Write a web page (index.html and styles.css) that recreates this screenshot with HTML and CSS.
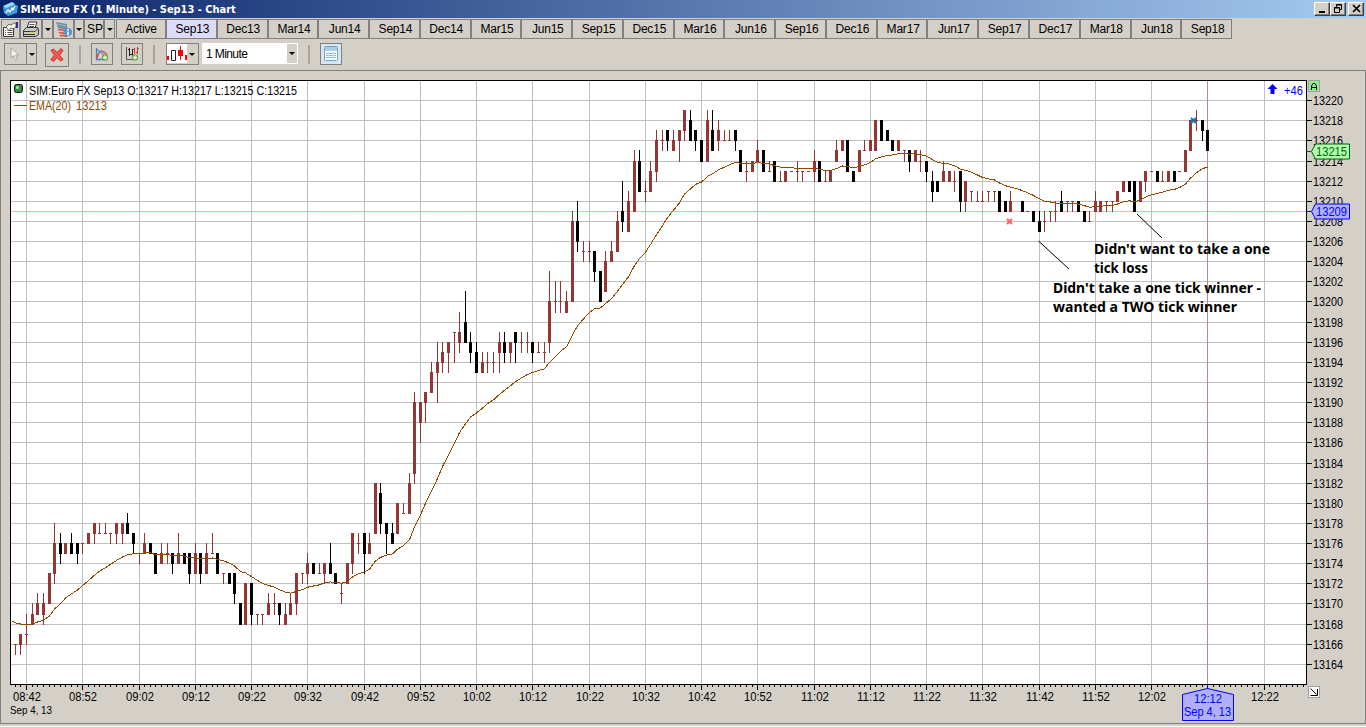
FILE: index.html
```html
<!DOCTYPE html>
<html lang="en">
<head>
    <meta charset="UTF-8">
    <meta name="viewport" content="width=device-width, initial-scale=1.0">
    <title>SIM:Euro FX (1 Minute) - Sep13 - Chart</title>
    <link rel="stylesheet" href="styles.css">
</head>
<body>
    <div class="window">
        <div class="titlebar">
            <svg class="app-icon" width="15" height="16" viewBox="0 0 15 16">
                <path d="M0 6 L9 2 L15 5 L14 12 L5 15 L1 12 Z" fill="#3d9be0"/>
                <path d="M0 5 L9 1 L12 3 L3 7 Z" fill="#a8dcf8"/>
                <path d="M3 12 L5 9 L7 11 L9 7 L10 9 L12 5" fill="none" stroke="#fff" stroke-width="1.2"/>
            </svg>
            <span class="title">SIM:Euro FX (1 Minute) - Sep13 - Chart</span>
            <div class="window-buttons">
                <button><svg width="13" height="12"><path d="M3 8h6v2h-6z"/></svg></button>
                <button><svg width="13" height="12" fill="none" stroke="#000"><path d="M4.5 4V1.5h5v5H8M4 2h6M2.5 4.5h5v5h-5zM2 5h6"/></svg></button>
                <button class="close"><svg width="13" height="12" fill="none" stroke="#000" stroke-width="1.7"><path d="M3 2l7 7M10 2l-7 7"/></svg></button>
            </div>
        </div>

        <div class="tabs">
            <button class="tool props"><svg width="17" height="17" viewBox="0 0 17 17">
                <path d="M1.5 6.5h10v9h-10z" fill="#fff" stroke="#333"/>
                <path d="M3 9.5h1M5.5 9.5h5M3 11.5h1M5.5 11.5h5M3 13.5h1M5.5 13.5h5" stroke="#555"/>
                <path d="M4 6l3-3 2 1 3-2h2v4l-3 2-2-1-2 3z" fill="#f5f0e4" stroke="#444" stroke-width=".8"/>
                <path d="M14 1h2v6h-2z" fill="#2b2d9c"/>
            </svg></button>
            <button class="tool print"><svg width="18" height="17" viewBox="0 0 18 17">
                <path d="M5 7l2-6h8l-2 6z" fill="#fff" stroke="#333"/>
                <path d="M7.5 3.5h5M7 5.5h5" stroke="#555"/>
                <path d="M1.5 9.5l3-3h11l1 2v5l-3 2h-12z" fill="#c9c9c9" stroke="#333"/>
                <path d="M2 10.5h11l3-3M2 13.5h11" fill="none" stroke="#333"/>
                <path d="M8 11.5h4" stroke="#e3d321" stroke-width="1.5"/>
            </svg></button>
            <button class="tool drop"></button>
            <button class="tool feed"><svg width="18" height="17" viewBox="0 0 18 17">
                <path d="M1 1l11 2v6l-9-2z" fill="#6b8ca3"/><path d="M2 3l9 2" stroke="#9fb9ca"/>
                <path d="M3 9c3-2 5 2 8 0M4 12c3-2 5 2 7 0M5 15c3-2 4 1 7 0" fill="none" stroke="#d0564c" stroke-width="1.7"/>
                <circle cx="13" cy="11" r="4" fill="#4d94d8"/><path d="M13 10.5v3.5" stroke="#fff" stroke-width="1.7"/><path d="M12.2 8.7h1.7" stroke="#fff" stroke-width="1.4"/>
            </svg></button>
            <button class="tool drop feed-drop"></button>
            <button class="tool sp">SP</button>
            <button class="tool drop"></button>
            <button class="tab active-tab">Active</button>
            <div class="months" id="months"></div>
        </div>

        <div class="toolbar">
            <div class="split">
                <svg width="21" height="20" viewBox="0 0 21 20"><path d="M6 4v10l2.5-2.5 2 5 2-1-2-4.5h3.5z" fill="#f4f3f0" stroke="#aaa69e"/></svg>
                <span class="arrow"></span>
            </div>
            <button class="tbtn delete"><svg width="22" height="22" viewBox="0 0 22 22"><path d="M5 6.5l2.5-1.5 3.5 3.5 4-4 2 2-3.5 4.5 3.5 4.5-2.5 1.5-3.5-3.5-3.5 4-2.5-2 3.5-4.5z" fill="#f25a50" stroke="#c42a2a"/></svg></button>
            <span class="sep"></span>
            <button class="tbtn study"><svg width="20" height="20" viewBox="0 0 20 20">
                <path d="M4.5 4v11.5h11" fill="none" stroke="#4a7fb8" stroke-width="1.3"/>
                <path d="M5 14c2-8 5-9 10-3" fill="none" stroke="#e8413a" stroke-width="1.4"/>
                <path d="M5 6c4 0 5 6 10 6" fill="none" stroke="#46a5ed" stroke-width="1.4"/>
                <circle cx="13" cy="13.5" r="3.2" fill="#6aa84f"/><path d="M13 11.5v4M11 13.5h4" stroke="#fff" stroke-width="1.3"/>
            </svg></button>
            <button class="tbtn bars"><svg width="20" height="20" viewBox="0 0 20 20">
                <path d="M4.5 3v12.5h8" fill="none" stroke="#555"/>
                <path d="M7.5 4v8M6 5.5h1M8 10.5h2" stroke="#222"/><path d="M10.5 5v7" stroke="#222"/><path d="M12.5 4v6M11 5.5h1M15.5 3v7M14 8.5h1M16 4.5h1" stroke="#d33"/>
                <circle cx="13" cy="13.5" r="3.2" fill="#6aa84f"/><path d="M13 11.5v4M11 13.5h4" stroke="#fff" stroke-width="1.3"/>
            </svg></button>
            <span class="sep"></span>
            <div class="split candle-type">
                <svg width="20" height="19" viewBox="0 0 20 19">
                    <path d="M0 0h20v19H0z" fill="#fff"/>
                    <path d="M0 12h2v4H0zM18 11h2v5h-2zM11 6h5v6h-5zM13 2h1v14h-1z" fill="#f00"/>
                    <path d="M4.5 6.5h4v10h-4z" fill="#fff" stroke="#222"/>
                </svg>
                <span class="arrow"></span>
            </div>
            <div class="period"><span>1 Minute</span><span class="arrow"></span></div>
            <span class="sep period-sep"></span>
            <button class="tbtn sheet"><svg width="20" height="20" viewBox="0 0 20 20">
                <rect x="3.5" y="2.5" width="13" height="14" rx="1" fill="#fff" stroke="#6ba4d0"/>
                <path d="M4 3h12v4H4z" fill="#a7cdea"/>
                <path d="M5 9.5h10M5 11.5h10M5 13.5h10" stroke="#8fb9da"/><path d="M7.5 8v7M12.5 8v7" stroke="#c4dcee"/>
            </svg></button>
        </div>

        <div class="chart-panel">
            <svg id="chart" width="1366" height="654" viewBox="0 70 1366 654"></svg>
        </div>
    </div>
    <script src="chart.js"></script>
</body>
</html>
```
FILE: styles.css
```css
body {
    margin: 0;
    width: 1366px;
    height: 728px;
    overflow: hidden;
    background-color: #d4d0c8;
    font-family: "Liberation Sans", Arial, sans-serif;
    font-size: 12px;
    color: #000;
}
.window {
    display: flex;
    flex-direction: column;
    height: 728px;
}
button {
    box-sizing: border-box;
    margin: 0;
    padding: 0;
    border: 1px solid #808080;
    background-color: #d4d0c8;
    color: #000;
    font: inherit;
    display: flex;
    align-items: center;
    justify-content: center;
}
svg {
    flex-shrink: 0;
}
.titlebar {
    display: flex;
    align-items: center;
    height: 18px;
    padding: 0 2px 0 3px;
    background: linear-gradient(90deg, #0a246a, #a6caf0);
}
.title {
    flex: 1;
    margin-left: 2px;
    color: #fff;
    font-family: "DejaVu Sans Condensed", "DejaVu Sans", sans-serif;
    font-stretch: condensed;
    font-weight: bold;
    font-size: 11px;
    letter-spacing: -0.03px;
    white-space: nowrap;
}
.window-buttons {
    display: flex;
}
.window-buttons button {
    width: 16px;
    height: 14px;
    border: 1px solid;
    border-color: #fff #404040 #404040 #fff;
    box-shadow: inset -1px -1px #808080;
}
.window-buttons .close {
    margin-left: 2px;
}
.tabs {
    display: flex;
    height: 20px;
    margin-top: 1px;
    padding-left: 1px;
}
.props {
    width: 19px;
}
.print {
    width: 22px;
}
.drop {
    width: 11px;
}
.feed {
    width: 21px;
}
.feed-drop {
    width: 10px;
}
.sp {
    width: 20px;
    padding-left: 2px;
}
.drop::after,
.arrow::after {
    content: "";
    border: 3px solid transparent;
    border-top-color: #000;
    border-bottom: 0;
}
.tab {
    padding-left: 2px;
    letter-spacing: -0.2px;
}
.active-tab {
    width: 50px;
    margin-left: 1px;
    padding-left: 0;
}
.months {
    display: flex;
    width: 1066px;
}
.months .tab {
    flex: 1;
}
.months .selected {
    background-color: #dcdcfa;
}
.toolbar {
    display: flex;
    align-items: flex-start;
    height: 27px;
    padding: 4px 0 0 4px;
}
.split {
    display: flex;
    box-sizing: border-box;
    width: 33px;
    height: 22px;
    border: 1px solid #808080;
}
.split .arrow {
    border-left: 1px solid #808080;
}
.arrow {
    display: flex;
    align-items: center;
    justify-content: center;
    width: 10px;
}
.tbtn {
    width: 22px;
    height: 22px;
}
.delete {
    width: 24px;
    height: 24px;
    margin-left: 8px;
}
.sep {
    width: 2px;
    height: 19px;
    margin: 2px 10px 0;
    background-color: #a8a49c;
}
.bars {
    margin-left: 8px;
}
.candle-type {
    margin-left: 1px;
}
.candle-type .arrow {
    border-left: 0;
}
.period {
    display: flex;
    justify-content: space-between;
    box-sizing: border-box;
    width: 96px;
    height: 21px;
    margin-left: 3px;
    padding: 1px 1px 1px 4px;
    background-color: #fff;
    line-height: 20px;
    letter-spacing: -0.6px;
}
.period .arrow {
    background-color: #d4d0c8;
}
.sheet {
    background-color: #d9e5ef;
}
.chart-panel {
    height: 656px;
    border-bottom: 1px solid #fff;
}
.chart-panel svg {
    display: block;
}
.grid {
    stroke: #c0c0c0;
}
.axis {
    stroke: #000;
}
.up {
    fill: #933636;
}
.down {
    fill: #000;
}
.ema {
    fill: none;
    stroke: #914800;
    stroke-width: 1;
}
.note {
    font-family: "Noto Sans", "Open Sans", sans-serif;
    font-weight: bold;
    font-size: 14px;
}
```
FILE: chart.js
```js
const months = document.getElementById('months');
const names = ['Sep13', 'Dec13'];
for (let year = 14; year <= 18; year++) {
    ['Mar', 'Jun', 'Sep', 'Dec'].forEach(m => names.push(m + year));
}
names.slice(0, 21).forEach((name, i) => {
    const tab = document.createElement('button');
    tab.className = i === 0 ? 'tab selected' : 'tab';
    tab.textContent = name;
    months.appendChild(tab);
});

// open high low close, offset from 13100, one bar per minute from 08:39
const raw = `67 67 67 67,66 66 65 66,66 67 65 67,67 69 66 67,68 70 68 69,69 71 69 70,69 71 68 70,70 73 70 73,
73 78 72 76,76 77 74 75,75 76 75 76,76 77 75 75,76 76 74 75,76 76 75 76,76 77 76 77,77 78 76 78,77 78 77 77,
77 78 77 77,77 77 76 77,77 78 76 78,77 78 76 78,78 79 77 77,77 77 75 76,75 75 74 75,75 77 75 76,76 76 75 75,
75 75 73 73,74 76 74 75,75 76 74 75,75 75 73 74,74 77 74 75,75 75 74 74,75 75 72 73,73 76 73 75,75 75 72 73,
73 76 73 75,75 77 75 75,75 75 73 73,73 73 72 73,73 73 72 72,73 73 70 71,70 70 68 68,68 72 68 72,72 72 68 69,
69 69 68 69,69 69 68 69,69 71 69 70,70 71 69 70,70 70 68 69,68 70 68 69,69 71 69 70,70 73 69 73,73 73 72 73,
73 75 72 74,74 74 73 73,73 74 73 73,73 74 72 74,74 76 73 73,73 73 72 72,71 72 70 71,72 74 72 74,74 77 73 77,
76 77 75 76,77 77 73 75,75 77 75 76,77 82 77 82,81 82 77 78,78 78 75 77,77 78 76 76,77 80 77 80,79 80 79 79,
79 83 79 82,83 91 82 90,88 90 86 90,90 91 88 91,91 94 91 93,93 96 90 94,94 96 93 95,95 96 93 96,97 97 94 97,
96 99 95 97,98 101 96 96,96 97 94 95,95 96 93 93,93 95 93 94,94 95 93 94,94 95 93 94,95 97 93 96,96 97 94 95,
95 96 94 96,97 97 94 96,96 97 95 96,96 97 95 96,96 96 94 95,95 96 95 95,95 96 94 95,96 103 95 100,
100 102 99 100,100 102 99 100,99 101 99 100,100 109 100 108,108 110 105 106,105 106 104 105,105 106 104 105,
105 105 102 103,103 103 100 100,101 105 101 104,104 106 104 105,105 109 105 108,109 112 107 108,107 111 107 110,
109 115 109 114,114 115 111 111,111 112 110 111,111 114 111 113,113 117 112 116,116 117 115 116,117 117 115 116,
115 117 115 116,116 117 114 117,117 119 116 119,118 119 116 116,117 117 115 116,116 116 114 114,114 119 114 118,
117 119 115 115,116 118 115 117,116 117 116 116,116 117 116 116,117 117 115 116,115 115 113 113,113 114 112 113,
113 114 113 114,114 116 114 115,115 115 113 113,113 114 113 113,114 114 112 112,112 113 112 112,112 113 112 113,
113 113 113 113,113 114 112 113,113 113 112 113,113 113 113 113,113 115 112 114,114 114 112 112,112 113 112 112,
112 113 112 113,114 116 114 115,115 116 115 116,116 116 113 113,113 113 112 112,113 115 113 115,115 116 115 115,
115 116 115 116,115 118 115 118,118 118 116 116,117 117 116 116,116 116 115 115,115 116 115 116,115 115 114 115,
115 115 113 114,114 115 114 115,114 115 113 114,114 114 112 113,112 113 110 111,112 112 111 111,112 114 112 113,
112 113 112 113,112 113 111 112,113 113 109 110,110 112 109 112,111 111 110 111,110 111 110 110,110 111 110 110,
111 111 110 111,111 111 110 111,111 111 109 109,110 110 109 109,109 111 109 110,110 110 110 110,110 110 109 109,
109 109 109 109,109 109 108 108,108 109 107 107,108 109 107 108,109 109 108 109,109 110 108 109,110 111 109 109,
110 110 109 110,110 110 109 110,110 110 109 109,109 109 108 108,108 109 108 108,109 111 109 110,109 110 109 110,
110 110 109 110,110 110 109 110,110 111 110 111,111 112 111 112,112 112 111 111,112 112 109 109,110 112 110 112,
112 113 111 113,113 113 113 113,113 113 112 112,112 113 112 112,112 113 112 113,113 113 112 112,113 113 113 113,
113 115 113 115,115 118 115 118,118 119 117 118,118 118 116 117,117 117 115 115`;
const bars = raw.split(',').map(s => s.trim().split(' ').map(Number));

const FIRST = -3;       // minutes from 08:42
const X = i => Math.round(26 + i * 5.625);
const Y = p => Math.floor(100.64 + (120 - p) * 10.067);

let out = '';
const rect = (x, y, w, h, attrs) => { out += `<rect x="${x}" y="${y}" width="${w}" height="${h}" ${attrs}/>`; };
const line = (x1, y1, x2, y2, attrs) => { out += `<line x1="${x1}" y1="${y1}" x2="${x2}" y2="${y2}" ${attrs}/>`; };
const text = (x, y, w, str, attrs = '') => {
    out += `<text x="${x}" y="${y}" textLength="${w}" lengthAdjust="spacingAndGlyphs" ${attrs}>${str}</text>`;
};

// panel edges and plot background
out += '<g shape-rendering="crispEdges">';
rect(0, 70, 1366, 1, 'fill="#808080"');
rect(0, 70, 1, 654, 'fill="#808080"');
rect(1365, 70, 1, 654, 'fill="#808080"');
rect(0, 723, 1366, 1, 'fill="#808080"');
rect(10, 80, 1297, 605, 'fill="#fff"');

for (let p = 64; p <= 120; p += 2) {
    line(11, Y(p) + .5, 1306, Y(p) + .5, 'class="grid"');
    line(1307, Y(p) + .5, 1312, Y(p) + .5, 'class="axis"');
}
for (let i = 0; i <= 220; i += 10) {
    line(X(i) + .5, 81, X(i) + .5, 684, 'class="grid"');
}
line(11, Y(109) + .5, 1306, Y(109) + .5, 'stroke="#ffb0b0"');
line(X(210) + .5, 81, X(210) + .5, 684, 'stroke="#c88484"');

bars.forEach(([o, h, l, c], n) => {
    const x = X(n + FIRST);
    const cls = `class="${c >= o ? 'up' : 'down'}"`;
    if (n + FIRST === 176) return;
    rect(x, Y(h), 1, Y(l) - Y(h) + 1, cls);
    rect(x - 1, Y(Math.max(o, c)), 3, Math.abs(Y(o) - Y(c)) + 1, cls);
});

// EMA(20) of the closes
let ema = 68.35;
const pts = bars.map((b, n) => {
    if (n) ema += (b[3] - ema) * 2 / 21;
    return `${Math.max(11, X(n + FIRST)) + .5},${(100.7 + (120 - ema) * 10.067).toFixed(1)}`;
});
out += `<polyline class="ema" points="${pts.join(' ')}"/>`;

rect(7, 81, 3, 603, 'fill="#d4d0c8"');
line(10.5, 80, 10.5, 685, 'class="axis"');
line(10, 80.5, 1307, 80.5, 'class="axis"');
line(10, 684.5, 1307, 684.5, 'class="axis"');
line(1306.5, 80, 1306.5, 685, 'class="axis"');
for (let i = -2; i <= 227; i++) {
    line(X(i) + .5, 685, X(i) + .5, i % 10 ? 687 : 690, 'class="axis"');
}
line(14, 105.5, 27, 105.5, 'stroke="#914800"');
out += '</g>';

for (let i = 0; i <= 220; i += 10) {
    if (i === 210) continue;
    const t = 8 * 60 + 42 + i;
    const label = String(Math.floor(t / 60)).padStart(2, '0') + ':' + String(t % 60).padStart(2, '0');
    text(X(i) - 13, 701, 28, label);
}
text(10, 714, 42, 'Sep 4, 13', 'font-size="11"');
for (let p = 64; p <= 120; p += 2) {
    text(1313, Y(p) + 5, 30, 13100 + p);
}

// legend
rect(14.5, 84.5, 8, 8, 'rx="2" fill="#2f8a3c" stroke="#111"');
rect(16, 86, 3, 3, 'rx="1" fill="#9fe0a0"');
text(29, 95, 268, 'SIM:Euro FX Sep13 O:13217 H:13217 L:13215 C:13215');
text(29, 110, 42, 'EMA(20)', 'fill="#914800"');
text(76, 110, 31, '13213', 'fill="#914800"');
out += '<path d="M1272.5 84l5 5h-3v5h-4v-5h-3z" fill="#00f"/>';
text(1284, 95, 19, '+46', 'fill="#00f"');
rect(1308.5, 80.5, 11, 11, 'fill="#90ee90" stroke="#a0a0a0"');
out += '<path d="M1311.5 90v-4l1.5-2.5h2l1.5 2.5v4M1311.5 87.5h5" fill="none" stroke="#000"/>';

// trade markers
const marker = (x, y, color) => {
    out += `<path d="M${x - 2.5} ${y - 2.5}l5 5m0 -5l-5 5" stroke="${color}" stroke-width="2.2"/>`;
};
marker(1009.5, 221.5, '#ff6464');
marker(1193.5, 120.5, '#1478b4');

// notes
out += '<path d="M1137 214L1162 238M1038.5 241L1069 269" stroke="#000"/>';
text(1094, 254, 176, "Didn't want to take a one", 'class="note"');
text(1094, 273, 54, 'tick loss', 'class="note"');
text(1053, 293, 208, "Didn't take a one tick winner -", 'class="note"');
text(1053, 312, 184, 'wanted a TWO tick winner', 'class="note"');

// price and time tags
const priceTag = (y, str, fill, stroke) => {
    line(1306, y + .5, 1311, y + .5, `stroke="${stroke}"`);
    out += `<path d="M1311.5 ${y + .5}l4 -7.5h34v15h-34z" fill="${fill}" stroke="${stroke}"/>`;
    text(1316, y + 5, 31, str, `fill="${stroke}"`);
};
priceTag(151, '13215', '#b0ffb0', '#006400');
priceTag(211, '13209', '#b0b0ff', '#0000ff');
out += '<path d="M1207.5 685V688.5L1233.5 694.5V720.5H1182.5V694.5L1207.5 688.5" fill="#b0b0ff" stroke="#00f"/>';
text(1194, 703, 28, '12:12', 'fill="#00f"');
text(1184, 716, 47, 'Sep 4, 13', 'fill="#00f"');
rect(1308.5, 686.5, 11, 11, 'fill="#fff" stroke="#a0a0a0"');
out += '<path d="M1310.5 688.5l6 6M1317.5 689v6.5h-7" fill="none" stroke="#000"/>';

document.getElementById('chart').innerHTML = out;
```
